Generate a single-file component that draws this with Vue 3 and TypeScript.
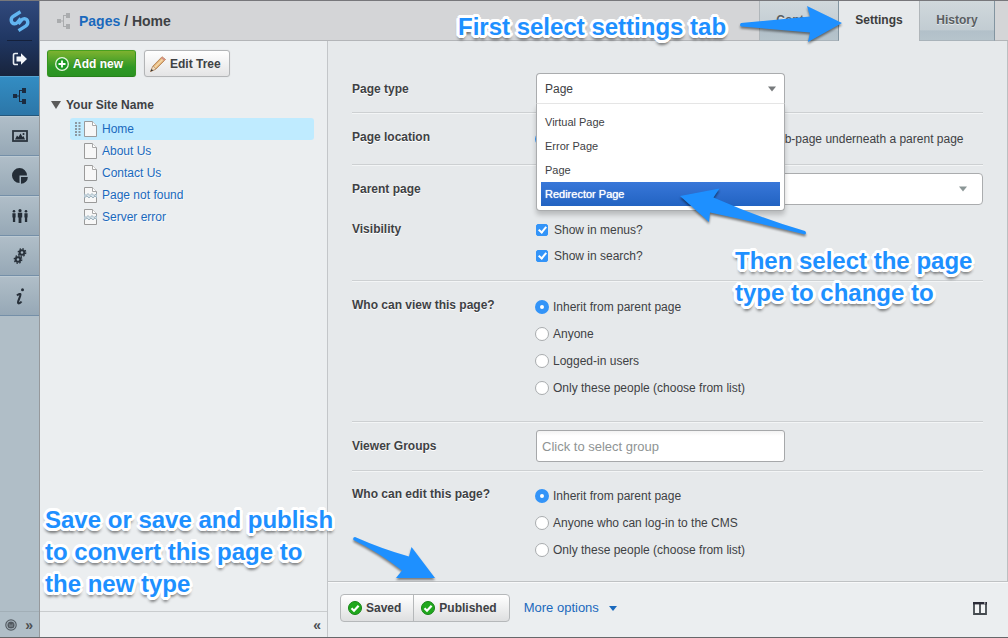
<script setup lang="ts">
import { ref } from 'vue'

interface TreePage {
  title: string
  broken: boolean
}

const pages: TreePage[] = [
  { title: 'Home', broken: false },
  { title: 'About Us', broken: false },
  { title: 'Contact Us', broken: false },
  { title: 'Page not found', broken: true },
  { title: 'Server error', broken: true },
]
const currentPage = ref('Home')

const tabs = ['Content', 'Settings', 'History']
const activeTab = ref('Settings')

const pageTypes = ['Virtual Page', 'Error Page', 'Page', 'Redirector Page']
const pageType = ref('Page')
const highlighted = ref('Redirector Page')

const location = ref('root')
const showInMenus = ref(true)
const showInSearch = ref(true)

const viewOptions = ['Inherit from parent page', 'Anyone', 'Logged-in users', 'Only these people (choose from list)']
const canView = ref(viewOptions[0])
const editOptions = ['Inherit from parent page', 'Anyone who can log-in to the CMS', 'Only these people (choose from list)']
const canEdit = ref(editOptions[0])
</script>

<template>
  <div class="cms">
    <nav class="rail" aria-label="Main menu">
      <div class="brand">
        <a href="#" class="logo" aria-label="SilverStripe">
          <svg width="24" height="24" viewBox="0 0 24 24" fill="none" stroke="#62b5f0" stroke-width="3.4">
            <path d="M12.500 2.800 5.400 7.200C1.800 9.800 3 14.400 6.600 14.800 9.500 14.900 10 12 12.800 9.600" />
            <path d="M10.500 21.600 17.600 17.200C21.200 14.600 20 10 16.400 9.600 13.500 9.500 13 12.400 10.200 14.800" />
          </svg>
        </a>
        <a href="#" class="logout" aria-label="Log out">
          <svg width="16" height="14" viewBox="0 0 16 14">
            <path d="M6 1.500H3A1.500 1.500 0 0 0 1.500 3v8A1.500 1.500 0 0 0 3 12.500H6" fill="none" stroke="#e8edf2" stroke-width="1.600" />
            <path d="M4.500 4.500H9V1.200L15 7 9 12.800V9.500H4.500z" fill="#f4f7fa" />
          </svg>
        </a>
      </div>
      <a href="#" class="item active" aria-label="Pages">
        <svg width="16" height="16" viewBox="0 0 16 16" fill="#1b2b40">
          <rect x="1" y="6" width="4" height="4" /><rect x="10" y="0" width="4" height="5" /><rect x="10" y="11" width="4" height="5" />
          <path d="M5 7.500h2V2H10v1H8v10h2v1H7V8.500H5z" />
        </svg>
      </a>
      <a href="#" class="item" aria-label="Files">
        <svg width="16" height="12" viewBox="0 0 16 12">
          <rect x="1" y="1" width="14" height="10" fill="#a5b3be" stroke="#2b343e" stroke-width="1.800" />
          <path d="M3 9.500 5 5.500 6.500 7 8.500 3.500 10.500 7 11.500 6 13 9.500z" fill="#222b35" />
          <circle cx="11.500" cy="4" r="1" fill="#222b35" />
        </svg>
      </a>
      <a href="#" class="item" aria-label="Reports">
        <svg width="16" height="16" viewBox="0 0 16 16" fill="#242d37">
          <path d="M7.500 0A7.500 7.500 0 1 0 7.500 15V7.500H15A7.500 7.500 0 0 0 7.500 0z" />
          <path d="M9 9h6.800A6.800 6.800 0 0 1 9 15.800z" />
        </svg>
      </a>
      <a href="#" class="item" aria-label="Security">
        <svg width="18" height="14" viewBox="0 0 18 14" fill="#242d37">
          <circle cx="3" cy="2.300" r="1.300" /><path d="M1.400 4.200h3.200V8.500H4.200V13H1.900V8.500H1.400z" />
          <circle cx="9" cy="1.700" r="1.600" /><path d="M6.800 3.800h4.400V8.500h-.8V14H7.600V8.500h-.8z" />
          <circle cx="15" cy="2.300" r="1.300" /><path d="M13.400 4.200h3.200V8.500h-.4V13h-2.300V8.500h-.5z" />
        </svg>
      </a>
      <a href="#" class="item" aria-label="Settings">
        <svg width="14" height="16" viewBox="0 0 14 16" fill="none" stroke="#28313b">
          <circle cx="9" cy="4.500" r="2.300" stroke-width="2" /><circle cx="9" cy="4.500" r="3.700" stroke-width="1.400" stroke-dasharray="1.450 1.450" />
          <circle cx="5" cy="11.500" r="2.300" stroke-width="2" /><circle cx="5" cy="11.500" r="3.700" stroke-width="1.400" stroke-dasharray="1.450 1.450" />
        </svg>
      </a>
      <a href="#" class="item" aria-label="Help">
        <svg width="10" height="17" viewBox="0 0 10 17">
          <circle cx="7.500" cy="1.800" r="1.500" fill="#28313b" />
          <path d="M2 7.500C3.500 5.800 5.500 5.500 5.500 6.500 5.500 8.500 3 12.500 3 14.500 3 16 5 15.500 6.500 13.500" fill="none" stroke="#28313b" stroke-width="2" />
        </svg>
      </a>
      <div class="rail-foot">
        <a href="#" aria-label="Profile">
          <svg width="12" height="12" viewBox="0 0 12 12"><circle cx="6" cy="6" r="5.200" fill="none" stroke="#555d64" stroke-width="1.200" /><circle cx="6" cy="6" r="3.600" fill="#50575e" /><path d="M4 4.500 5 8 6 5.500 7 8 8 4.500" fill="none" stroke="#7c868e" stroke-width=".8" /></svg>
        </a>
        <button type="button" class="chevrons" aria-label="Expand menu">»</button>
      </div>
    </nav>

    <div class="workspace">
      <header class="topbar">
        <svg class="crumb-icon" width="16" height="16" viewBox="0 0 16 16" fill="#aaacae">
          <rect x="1" y="6" width="4" height="4" /><rect x="10" y="0" width="4" height="5" /><rect x="10" y="11" width="4" height="5" />
          <path d="M5 7.500h2V2H10v1H8v10h2v1H7V8.500H5z" />
        </svg>
        <h1><a href="#">Pages</a> / Home</h1>
        <div class="tabs" role="tablist">
          <button v-for="tab in tabs" :key="tab" type="button" role="tab" class="tab" :class="{ current: tab === activeTab }" :aria-selected="tab === activeTab" @click="activeTab = tab">{{ tab }}</button>
        </div>
      </header>

      <div class="body">
        <aside class="tree-panel">
          <div class="tools">
            <button type="button" class="btn add">
              <svg width="14" height="14" viewBox="0 0 14 14"><circle cx="7" cy="7" r="6.300" fill="#1d9a24" stroke="#e9f5e2" stroke-width="1.300" /><path d="M7 3.500v7M3.500 7h7" stroke="#fff" stroke-width="1.800" /></svg>
              Add new
            </button>
            <button type="button" class="btn">
              <svg width="16" height="16" viewBox="0 0 16 16"><path d="M.500 15.500 3 10 12 .800 15.500 3.500 6 13z" fill="#e3b278" stroke="#ad7b4b" stroke-width=".8" /><path d="M4.500 11.500 13 3" stroke="#f5d9a8" stroke-width="1.600" /><path d="M11 2 12 .800 15.500 3.500 14.300 5z" fill="#d79184" /><path d="M.500 15.500 3 10 6 13z" fill="#f0dcc0" stroke="#ad8b6b" stroke-width=".6" /><path d="M.500 15.500 1.600 13 3.200 14.600z" fill="#333" /></svg>
              Edit Tree
            </button>
          </div>
          <div class="tree">
            <div class="root">
              <svg width="10" height="8" viewBox="0 0 10 8"><path d="M0 0h10L5 8z" fill="#5a5a5a" /></svg>
              Your Site Name
            </div>
            <ul>
              <li v-for="page in pages" :key="page.title" :class="{ selected: page.title === currentPage }">
                <svg class="grip" width="6" height="14" viewBox="0 0 6 14"><path d="M1 0v14M4.500 0v14" stroke="#8b99a2" stroke-width="2" stroke-dasharray="2 1" /></svg>
                <svg width="13" height="16" viewBox="0 0 13 16">
                  <path d="M.500.500h8l4 4v11H.500z" fill="#f7f7f7" stroke="#9a9a9a" />
                  <path d="M8.500.500v4h4" fill="#fff" stroke="#a8a8a8" />
                  <path v-if="page.broken" d="M0 6.500 2 8.500 4 6.500 6 8.500 8 6.500 10 8.500 13 6.500V11L11 9 9 11 7 9 5 11 3 9 0 11z" fill="#d5e2e9" stroke="#8fa6b4" stroke-width=".8" />
                </svg>
                <a href="#" @click.prevent="currentPage = page.title">{{ page.title }}</a>
              </li>
            </ul>
          </div>
          <div class="panel-foot"><button type="button" class="chevrons" aria-label="Collapse panel">«</button></div>
        </aside>

        <main class="content">
          <form class="form" @submit.prevent>
            <div class="row middle first">
              <label for="page-type">Page type</label>
              <div class="chosen">
                <div class="chosen-box">
                  <select id="page-type" v-model="pageType">
                    <option v-for="type in pageTypes" :key="type">{{ type }}</option>
                  </select>
                  <span class="caret"></span>
                </div>
                <div class="menu">
                  <ul role="listbox" aria-label="Page type">
                    <li v-for="type in pageTypes" :key="type" role="option" :aria-selected="type === pageType" :class="{ hot: type === highlighted }" @mouseenter="highlighted = type" @click="pageType = type">{{ type }}</li>
                  </ul>
                </div>
              </div>
            </div>
            <div class="row" role="radiogroup" aria-labelledby="loc">
              <span id="loc" class="label">Page location</span>
              <div class="choices places">
                <input v-model="location" type="radio" name="location" value="root" aria-labelledby="loc" />
                <label><input v-model="location" type="radio" name="location" value="sub" />Sub-page underneath a parent page</label>
              </div>
            </div>
            <div class="row middle plain">
              <label for="parent">Parent page</label>
              <div class="parent-box">
                <select id="parent"><option value=""></option></select>
                <span class="caret"></span>
              </div>
            </div>
            <div class="row visibility" role="group" aria-labelledby="vis">
              <span id="vis" class="label">Visibility</span>
              <div class="checks">
                <label><input v-model="showInMenus" type="checkbox" />Show in menus?</label>
                <label><input v-model="showInSearch" type="checkbox" />Show in search?</label>
              </div>
            </div>
            <div class="row viewers" role="radiogroup" aria-labelledby="view">
              <span id="view" class="label">Who can view this page?</span>
              <div class="choices">
                <label v-for="option in viewOptions" :key="option"><input v-model="canView" type="radio" name="view" :value="option" />{{ option }}</label>
              </div>
            </div>
            <div class="row middle">
              <label for="groups">Viewer Groups</label>
              <input id="groups" class="text" type="text" placeholder="Click to select group" />
            </div>
            <div class="row plain editors" role="radiogroup" aria-labelledby="edit">
              <span id="edit" class="label">Who can edit this page?</span>
              <div class="choices">
                <label v-for="option in editOptions" :key="option"><input v-model="canEdit" type="radio" name="edit" :value="option" />{{ option }}</label>
              </div>
            </div>
          </form>
          <footer class="actions">
            <div class="pair">
              <button v-for="name in ['Saved', 'Published']" :key="name" type="button" class="state">
                <svg width="14" height="14" viewBox="0 0 14 14"><circle cx="7" cy="7" r="6.500" fill="#20a81d" stroke="#178417" /><path d="M3.500 7.200 6 9.700 10.600 4.700" fill="none" stroke="#fff" stroke-width="2.200" /></svg>
                {{ name }}
              </button>
            </div>
            <button type="button" class="more">More options <span class="caret"></span></button>
            <button type="button" class="view-mode" aria-label="Split view">
              <svg width="14" height="13" viewBox="0 0 14 13"><path d="M1 1h12v11H1zM7 2v10" fill="#f3f5f6" stroke="#444a4f" stroke-width="1.800" /><path d="M0 1.200h14" stroke="#2b2c38" stroke-width="2.400" /><path d="M11 1h1.500" stroke="#fff" /></svg>
            </button>
          </footer>
        </main>
      </div>
    </div>

    <p class="note note-tab">First select settings tab</p>
    <svg class="arrow arrow-tab" width="108" height="42" viewBox="738 4 108 42"><path d="M741 23 810 16.500 807 6 842 23 808 42 810 32.500 741 26.500Q739 25 741 23z" /></svg>
    <p class="note note-type">Then select the page<br />type to change to</p>
    <svg class="arrow arrow-type" width="132" height="54" viewBox="678 184 132 54"><path d="M680 196 719.500 188.500 713.500 197.500Q760 218 805 231 807 233 805 234.500 755 222 710 212.500L709 222z" /></svg>
    <p class="note note-save">Save or save and publish<br />to convert this page to<br />the new type</p>
    <svg class="arrow arrow-save" width="88" height="50" viewBox="350 534 88 50"><path d="M355 537Q382 549 409 556.500L411.500 547 435 578H396L402 570.500Q378 552 353.500 540 352.500 537 355 537z" /></svg>
  </div>
</template>

<style>
body {
  margin: 0;
  background: #ebeef0;
}
</style>

<style scoped>
.cms {
  position: relative;
  box-sizing: border-box;
  display: flex;
  min-height: 100vh;
  border-top: 1px solid #77777b;
  border-bottom: 1px solid #66676a;
  overflow: hidden;
  color: #3e4144;
  font: 12px/16px "Liberation Sans", Arial, sans-serif;
}
a {
  color: #1a69bd;
  text-decoration: none;
}
ul {
  margin: 0;
  padding: 0;
  list-style: none;
}
button {
  font: inherit;
  color: inherit;
  cursor: pointer;
}
svg {
  display: block;
  flex: none;
}

.rail {
  flex: none;
  display: flex;
  flex-direction: column;
  width: 39px;
  border-right: 1px solid #96999c;
  background: #b0bec7;
}
.brand {
  height: 75px;
  background: linear-gradient(#31497c, #203763 50%, #18243c);
}
.logo,
.logout {
  display: flex;
  align-items: center;
  justify-content: center;
}
.logo {
  height: 39px;
  margin: 0 7px;
  border-bottom: 1px solid #14203a;
}
.logout {
  height: 35px;
}
.item {
  box-sizing: border-box;
  display: flex;
  align-items: center;
  justify-content: center;
  height: 40px;
  border-top: 1px solid #bccad3;
  border-bottom: 1px solid #748fa8;
  background: linear-gradient(#b0bec8, #96a8b6);
}
.item.active {
  border-top-color: #55a4d2;
  border-bottom-color: #24577c;
  background: linear-gradient(#338dc3, #2c76a8);
}
.rail-foot {
  display: flex;
  align-items: center;
  justify-content: space-between;
  height: 25px;
  margin-top: auto;
  padding: 0 6px 0 5px;
  border-top: 1px solid #a2afb7;
}
.chevrons {
  padding: 0;
  border: 0;
  background: none;
  color: #4c4f52;
  font-size: 14px;
  font-weight: bold;
  line-height: 20px;
}

.workspace {
  flex: 1;
  display: flex;
  flex-direction: column;
  min-width: 0;
}
.topbar {
  box-sizing: border-box;
  display: flex;
  align-items: center;
  height: 40px;
  padding-left: 16px;
  border-bottom: 1px solid #b3b5b8;
  background: #d4d5d7;
}
h1 {
  margin: 0 auto 0 7px;
  font-size: 14px;
  line-height: 20px;
}
.tabs {
  display: flex;
  align-self: stretch;
  margin: 0 13px -1px 0;
}
.tab {
  box-sizing: border-box;
  width: 80px;
  padding: 0 0 2px;
  border: solid;
  border-width: 0 1px 1px;
  border-color: #b4bcc2 #8294a0 #a9b3ba #b0b6ba;
  background: linear-gradient(#d0d8dc, #c2ccd2 75%, #b2c0c9 76%, #b6c4cc);
  color: #5a5e61;
  font-weight: bold;
  text-shadow: 0 1px 0 #e4e9ec;
}
.tab.current {
  border-color: #e6e9eb;
  background: #e6e9eb;
  color: #3c3c3c;
}
.tab:last-child {
  width: 76px;
}

.body {
  flex: 1;
  display: flex;
}
.tree-panel {
  flex: none;
  display: flex;
  flex-direction: column;
  box-sizing: border-box;
  width: 288px;
  border-right: 1px solid #c3c6c9;
  background: #ebeef0;
}
.tools {
  display: flex;
  gap: 8px;
  padding: 9px 7px;
}
.btn {
  box-sizing: border-box;
  display: flex;
  align-items: center;
  gap: 4px;
  height: 27px;
  padding: 0 8px 0 5px;
  border: 1px solid #b3b5b7;
  border-radius: 3px;
  background: linear-gradient(#fff, #e4e4e5);
  font-weight: bold;
  box-shadow: 0 0 1px #c8c8c8;
}
.btn.add {
  padding: 0 12px 0 7px;
  border-color: #48a01f #35961f #27801c;
  background: linear-gradient(#7db22f, #2f9826 65%, #2a9322);
  color: #fff;
  text-shadow: 0 -1px 0 #3d8127;
}
.tree {
  padding: 11px 13px 0 11px;
}
.root {
  display: flex;
  align-items: center;
  gap: 5px;
  margin-bottom: 5px;
  font-weight: bold;
}
.tree ul {
  margin-left: 19px;
}
.tree li {
  display: flex;
  align-items: center;
  height: 22px;
  padding-left: 5px;
  border-radius: 3px;
}
.tree li a {
  margin-left: 5px;
  text-shadow: 1px 1px 0 #f8fafb;
}
.tree li.selected {
  background: #bfebff;
}
.tree li.selected a {
  text-shadow: none;
}
.grip {
  visibility: hidden;
  margin-right: 3px;
}
.selected .grip {
  visibility: visible;
}
.panel-foot {
  display: flex;
  align-items: center;
  justify-content: flex-end;
  height: 25px;
  margin-top: auto;
  padding-right: 6px;
  border-top: 1px solid #c9ccce;
}

.content {
  flex: 1;
  display: flex;
  flex-direction: column;
  min-width: 0;
  background: #e6e9eb;
}
.form {
  flex: 1;
  padding: 0 24px;
  border-right: 1px solid #bcbfc1;
}
.row {
  display: grid;
  grid-template-columns: 184px 1fr;
  align-items: start;
  padding: 12px 0;
  border-bottom: 1px solid #cdd0d2;
  box-shadow: 0 1px 0 #f3f5f6;
}
.row.plain {
  border: 0;
  box-shadow: none;
}
.row.middle {
  align-items: center;
  padding: 8px 0;
}
.row.first {
  padding-top: 32px;
}
.row.visibility {
  padding: 4px 0 11px;
}
.row.viewers {
  padding: 12px 0 20px;
}
.row.editors {
  padding-top: 11px;
}
.label,
.middle > label {
  font-weight: bold;
  text-shadow: 0 1px 0 #fff;
}
.label {
  padding-top: 4px;
}
.choices {
  margin-left: -1px;
}
.choices label,
.checks label {
  display: flex;
  align-items: center;
  width: fit-content;
}
.choices label {
  gap: 4px;
  height: 27px;
}
.checks label {
  gap: 6px;
  height: 26px;
}
.places {
  display: grid;
  grid-template-columns: 217px 1fr;
  align-items: center;
}
input[type="radio"],
input[type="checkbox"] {
  appearance: none;
  box-sizing: border-box;
  display: grid;
  place-items: center;
  flex: none;
  margin: 0;
}
input[type="radio"] {
  width: 14px;
  height: 14px;
  border: 1px solid #a9acae;
  border-radius: 50%;
  background: #fff;
}
input[type="radio"]:checked {
  border: 5px solid #3394f8;
}
input[type="checkbox"] {
  width: 12px;
  height: 12px;
  border-radius: 2px;
  border: 1px solid #a9acae;
  background: #fff;
}
input[type="checkbox"]:checked {
  border-color: #3394f8;
  background: #3394f8;
}
input[type="checkbox"]:checked::after {
  content: "";
  width: 3px;
  height: 6px;
  margin-bottom: 2px;
  border: solid #fff;
  border-width: 0 2px 2px 0;
  transform: rotate(40deg);
}

.chosen {
  position: relative;
  width: 249px;
}
.chosen-box,
.parent-box {
  position: relative;
  box-sizing: border-box;
  border: 1px solid #aaacae;
  border-radius: 4px;
  background: #fff;
}
.chosen-box {
  height: 31px;
  border-bottom-color: #e6e6e6;
  border-radius: 4px 4px 0 0;
}
.parent-box {
  height: 32px;
}
select {
  appearance: none;
  width: 100%;
  height: 100%;
  padding: 0 8px;
  border: 0;
  background: none;
  color: #3e4144;
  font: inherit;
}
.caret {
  border: 4px solid transparent;
  border-top: 5px solid #777a7c;
  border-bottom: 0;
}
.chosen-box .caret,
.parent-box .caret {
  position: absolute;
  top: 50%;
  right: 8px;
  transform: translateY(-50%);
  pointer-events: none;
}
.parent-box .caret {
  right: 15px;
  border-top-color: #8b9696;
}
.menu {
  position: absolute;
  z-index: 2;
  top: 100%;
  left: 0;
  right: 0;
  box-sizing: border-box;
  padding: 6px 4px 4px;
  border: 1px solid #aaacae;
  border-top: 0;
  border-radius: 0 0 4px 4px;
  background: #fff;
  box-shadow: 0 4px 5px #0003;
}
.menu li {
  padding: 4px;
  font-size: 11px;
}
.menu li.hot {
  background: linear-gradient(#3877d9, #2263c2);
  color: #fff;
  text-shadow: 0 0 1px #fff;
}
.text {
  box-sizing: border-box;
  width: 249px;
  height: 32px;
  padding: 0 5px;
  border: 1px solid #a6a8aa;
  border-radius: 3px;
  background: linear-gradient(#f3f3f3, #fff 5px);
  font: 13px/16px "Liberation Sans", Arial, sans-serif;
}
.text::placeholder {
  color: #8f9494;
}

.actions {
  box-sizing: border-box;
  display: flex;
  align-items: center;
  height: 56px;
  padding: 0 21px 3px 12px;
  border-top: 1px solid #bfc2c4;
  background: #ebeef0;
  box-shadow: inset 0 1px 0 #f8f9fa;
}
.pair {
  display: flex;
  box-sizing: border-box;
  height: 28px;
  border: 1px solid #b5b8ba;
  border-radius: 4px;
  background: linear-gradient(#fff, #dedfe0);
}
.state {
  display: flex;
  align-items: center;
  gap: 4px;
  padding: 0 12px 0 7px;
  border: 0;
  background: none;
  font-weight: bold;
}
.state + .state {
  border-left: 1px solid #b5b8ba;
}
.more {
  display: flex;
  align-items: center;
  gap: 10px;
  margin-left: 14px;
  padding: 0;
  border: 0;
  background: none;
  color: #1a69bd;
  font-size: 13px;
}
.more .caret {
  border-top-color: #1a69bd;
}
.view-mode {
  margin-left: auto;
  padding: 0;
  border: 0;
  background: none;
}

.note {
  position: absolute;
  z-index: 3;
  margin: 0;
  color: #1e90ff;
  font-size: 24px;
  font-weight: bold;
  line-height: 32px;
  white-space: nowrap;
  text-shadow: 3px 0 0 #fff, -3px 0 0 #fff, 0 3px 0 #fff, 0 -3px 0 #fff, 2px 2px 0 #fff, -2px 2px 0 #fff, 2px -2px 0 #fff,
    -2px -2px 0 #fff, 3px 1px 0 #fff, -3px 1px 0 #fff, 1px 3px 0 #fff, -1px 3px 0 #fff, 1px -3px 0 #fff, -1px -3px 0 #fff,
    0 5px 3px #0006, 2px 4px 3px #0003, -2px 4px 3px #0003;
}
.note-tab {
  top: 10px;
  left: 458px;
}
.note-type {
  top: 244px;
  left: 735px;
}
.note-save {
  top: 503px;
  left: 45px;
}
.arrow {
  position: absolute;
  z-index: 3;
  fill: #1e90ff;
  filter: drop-shadow(0 2px 1px #0007);
  pointer-events: none;
}
.arrow-tab {
  top: 3px;
  left: 738px;
}
.arrow-type {
  top: 183px;
  left: 678px;
}
.arrow-save {
  top: 533px;
  left: 350px;
}
</style>
